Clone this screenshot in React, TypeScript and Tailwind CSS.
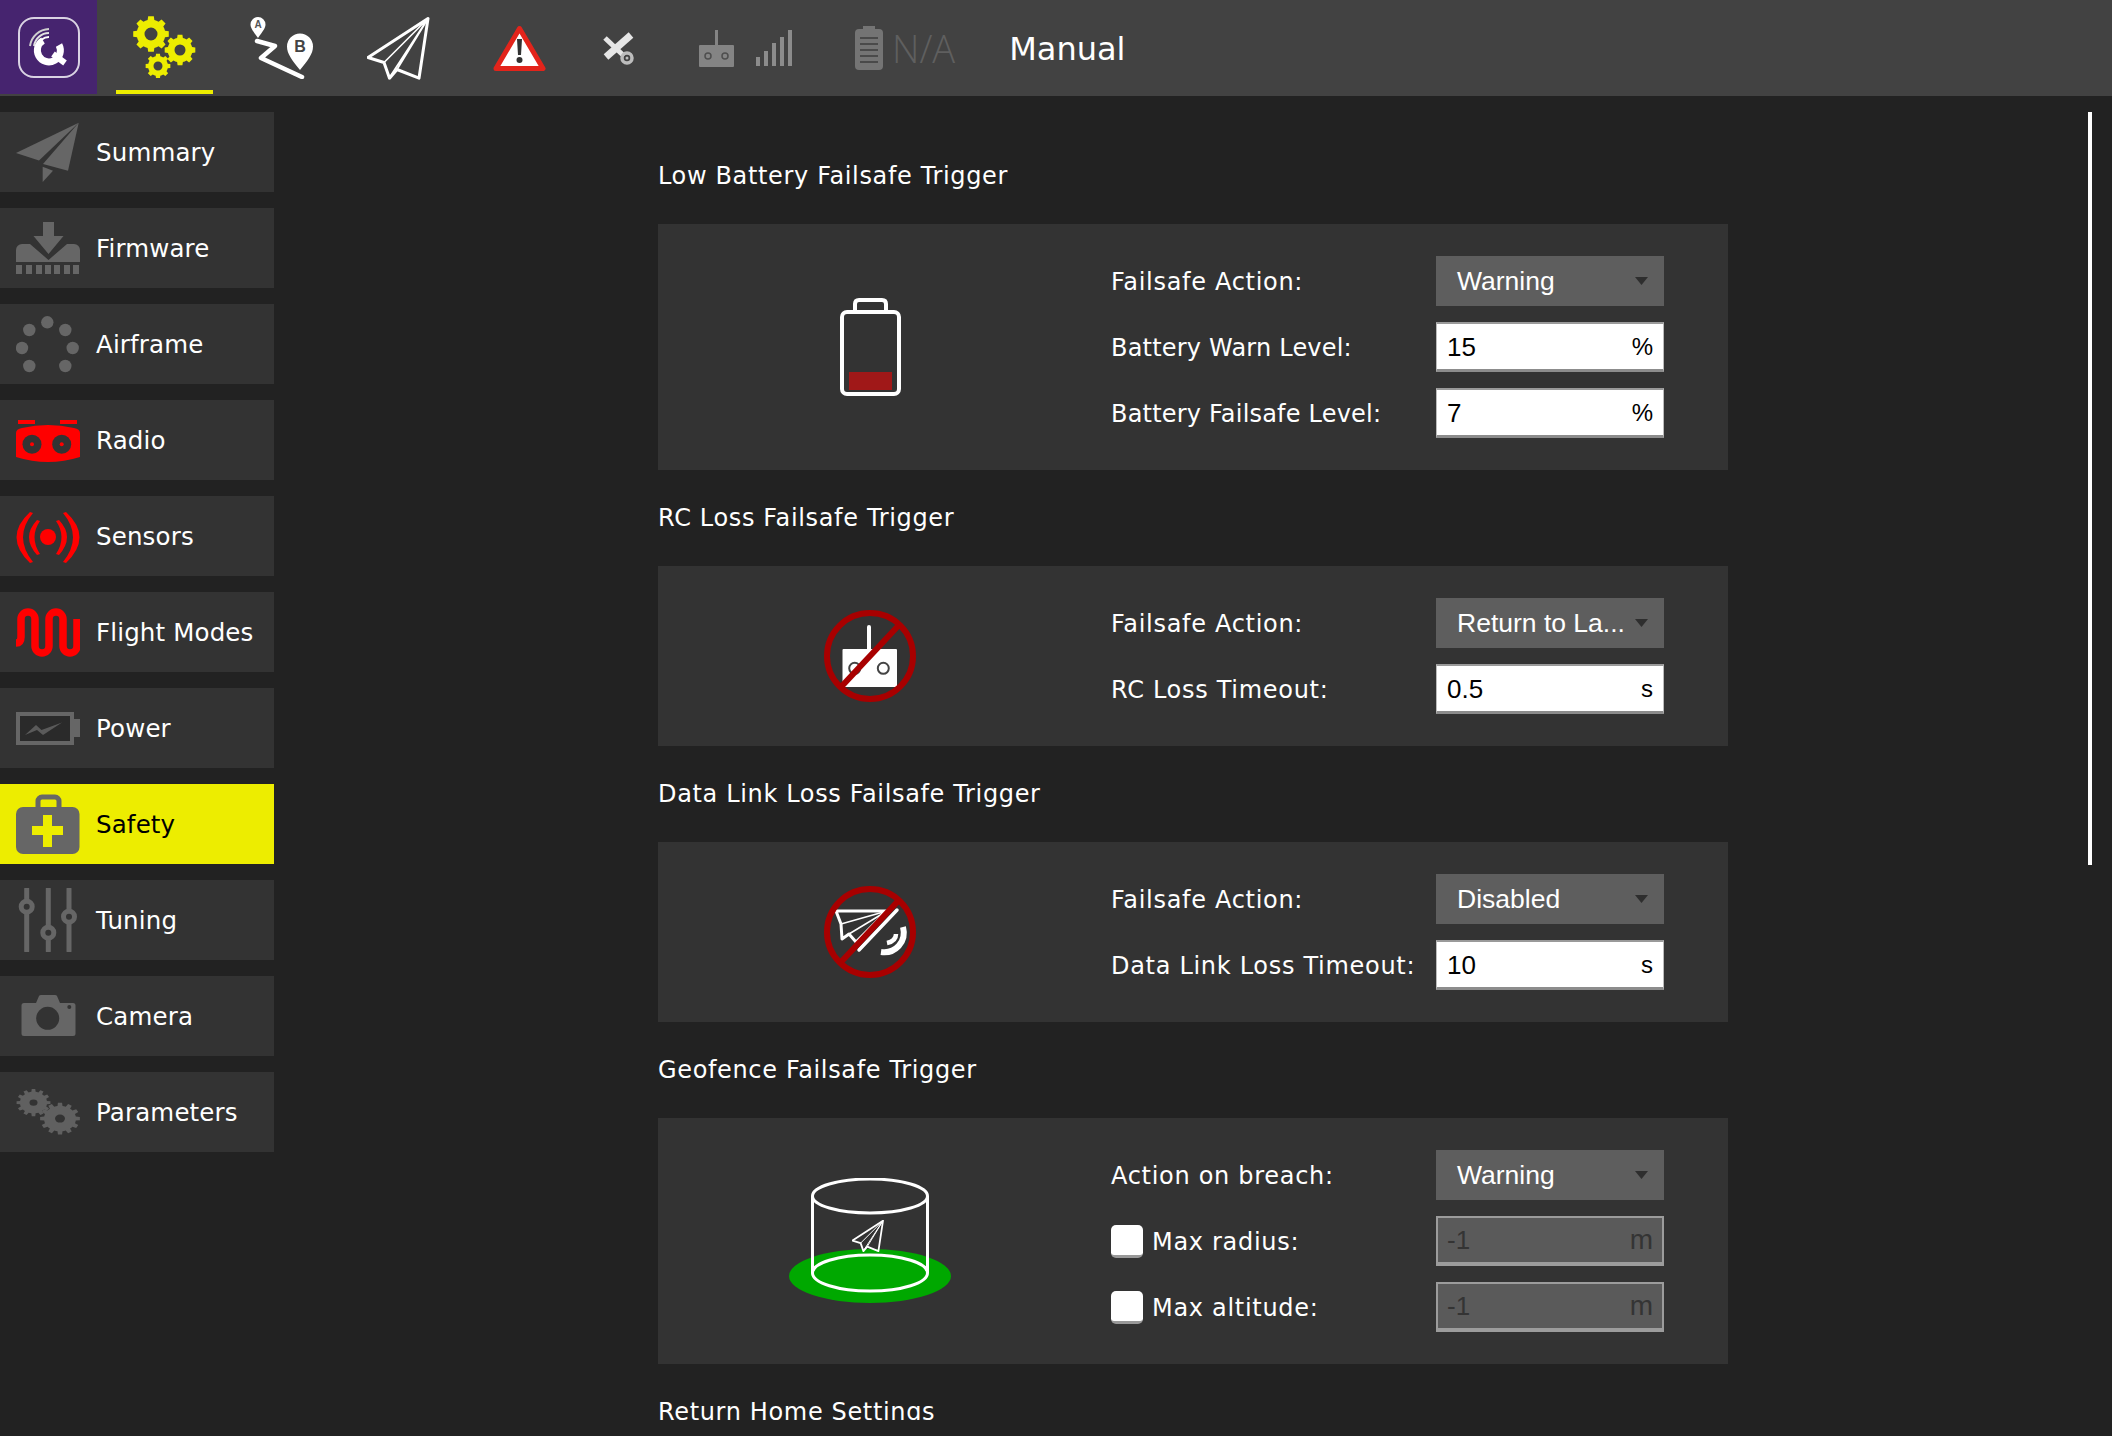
import React from 'react';

const UI = 'font-["DejaVu_Sans",sans-serif]';

// toothed wheel, outer radius r
function gearPath(cx: number, cy: number, r: number, teeth: number, hole = 0) {
  const inner = r * 0.8;
  const step = (Math.PI * 2) / teeth;
  let d = '';
  for (let i = 0; i < teeth; i++) {
    const a = i * step;
    const pts = [
      [inner, a - step * 0.5],
      [inner, a - step * 0.3],
      [r, a - step * 0.2],
      [r, a + step * 0.2],
      [inner, a + step * 0.3],
    ];
    pts.forEach(([rad, t], j) => {
      const x = (cx + rad * Math.cos(t)).toFixed(2);
      const y = (cy + rad * Math.sin(t)).toFixed(2);
      d += `${i === 0 && j === 0 ? 'M' : 'L'}${x} ${y}`;
    });
  }
  d += 'Z';
  if (hole) d += `M${cx - hole} ${cy}a${hole} ${hole} 0 1 0 ${hole * 2} 0a${hole} ${hole} 0 1 0 ${-hole * 2} 0Z`;
  return d;
}

const PLANE = 'M61 1L1 40L17 45L22.5 60.7L30 52L52 60.7Z';

function LogoIcon() {
  return (
    <svg width="62" height="61" viewBox="0 0 62 61" fill="none">
      <rect x="1" y="1" width="60" height="59" rx="15" stroke="#d9d3e3" strokeWidth="2" />
      <path d="M25 23.500A11.500 11.500 0 1 0 41 28" stroke="#fff" strokeWidth="7" />
      <path d="M35 37l12 9" stroke="#fff" strokeWidth="6" />
      <path d="M12 29a20 20 0 0 1 19-17" stroke="#cfcfcf" strokeWidth="2" />
      <path d="M16 29a15 15 0 0 1 15-13" stroke="#e2e2e2" strokeWidth="2" />
      <path d="M20 29a11 11 0 0 1 11-9" stroke="#fff" strokeWidth="2" />
    </svg>
  );
}

function GearsIcon() {
  return (
    <svg width="63" height="62" viewBox="0 0 63 62" fill="#eded00" fillRule="evenodd">
      <path d={gearPath(18, 18, 18, 8, 6.5)} />
      <path d={gearPath(47, 34, 15.5, 8, 5.5)} />
      <path d={gearPath(25, 50, 12.5, 8, 4.5)} />
    </svg>
  );
}

function RouteIcon() {
  return (
    <svg width="63" height="62" viewBox="0 0 63 62" fill="none">
      <path d="M8 21C3 14 0.5 11 0.5 7.5a7.5 7.5 0 0 1 15 0C15.500 11 13 14 8 21Z" fill="#fff" />
      <text x="8" y="11" textAnchor="middle" fontSize="10" fontWeight="700" fill="#555" fontFamily="Liberation Sans">A</text>
      <path d="M50 53C42 43 37 37 37 29.500a13 13 0 0 1 26 0C63 37 58 43 50 53Z" fill="#fff" />
      <text x="50" y="35" textAnchor="middle" fontSize="16" fontWeight="700" fill="#444" fontFamily="Liberation Sans">B</text>
      <path d="M7 24L25 29L11 41L52 60" stroke="#fff" strokeWidth="4.500" strokeLinecap="round" strokeLinejoin="round" />
    </svg>
  );
}

function PlaneOutline({ size = 63, width = 3 }: { size?: number; width?: number }) {
  return (
    <svg width={size} height={size} viewBox="0 0 63 62" fill="none" stroke="#fff" strokeLinejoin="round">
      <path d={PLANE} strokeWidth={width} />
      <path d="M61 1L17 45M61 1L30 52M61 1L22.500 60" strokeWidth={width * 0.55} />
    </svg>
  );
}

function WarningIcon() {
  return (
    <svg width="53" height="47" viewBox="0 0 53 47">
      <path d="M26.500 3.500L50 43.500H3Z" fill="#fff" stroke="#e3241b" strokeWidth="5" strokeLinejoin="round" />
      <path d="M24 14h5l-1 16h-3Z" fill="#333" />
      <circle cx="26.500" cy="35" r="3" fill="#333" />
    </svg>
  );
}

function SatelliteIcon() {
  return (
    <svg width="36" height="36" viewBox="0 0 36 36" fill="none">
      <path d="M31 5L6 27" stroke="#e6e6e6" strokeWidth="7" />
      <path d="M5 8L24 26" stroke="#e6e6e6" strokeWidth="5" />
      <circle cx="27" cy="28" r="5" stroke="#bdbdbd" strokeWidth="3.500" />
      <circle cx="27" cy="28" r="1.500" fill="#bdbdbd" />
    </svg>
  );
}

function RcIcon() {
  return (
    <svg width="35" height="37" viewBox="0 0 35 37" fill="#8c8c8c">
      <rect x="16" y="0" width="3" height="16" />
      <rect x="0" y="15" width="35" height="22" rx="1" />
      <circle cx="9" cy="26" r="3" fill="none" stroke="#505050" strokeWidth="1.500" />
      <circle cx="26" cy="26" r="3" fill="none" stroke="#505050" strokeWidth="1.500" />
    </svg>
  );
}

function SignalIcon() {
  return (
    <svg width="36" height="36" viewBox="0 0 36 36" fill="#8c8c8c">
      <rect x="0" y="27" width="4" height="9" />
      <rect x="8" y="21" width="4" height="15" />
      <rect x="16" y="13" width="4" height="23" />
      <rect x="24" y="7" width="4" height="29" />
      <rect x="32" y="0" width="4" height="36" />
    </svg>
  );
}

function BatteryTopIcon() {
  return (
    <svg width="28" height="44" viewBox="0 0 28 44" fill="#747474">
      <path d="M8 0h12v4H8Z" />
      <rect x="0" y="3" width="28" height="41" rx="4" />
      <g fill="#4a4a4a">
        <rect x="5" y="11" width="18" height="2" />
        <rect x="5" y="17" width="18" height="2" />
        <rect x="5" y="23" width="18" height="2" />
        <rect x="5" y="29" width="18" height="2" />
        <rect x="5" y="35" width="18" height="2" />
      </g>
    </svg>
  );
}

const SIDE_ICON = { width: 64, height: 64, viewBox: '0 0 64 64' };

function SummaryIcon() {
  return (
    <svg {...SIDE_ICON} fill="#666">
      <path d="M62.700 2.700L0 33L23 40.500Z" />
      <path d="M62.700 2.700L27 44L52 50.700Z" />
      <path d="M26.700 46.700V62L37 50.700Z" />
    </svg>
  );
}

function FirmwareIcon() {
  return (
    <svg {...SIDE_ICON} fill="#666">
      <path d="M27 6h11v14h9.500L32.500 38L17.500 20H27Z" />
      <path d="M0 46V34a6 6 0 0 1 6-6h8L32.500 44L51 28h7a6 6 0 0 1 6 6v12Z" />
      {[0, 10, 20, 29, 38, 48, 57].map((x) => (
        <rect key={x} x={x} y="49" width="6" height="9" />
      ))}
    </svg>
  );
}

function AirframeIcon() {
  const dots = [[31.3, 10.3], [13.3, 18], [49.3, 18], [6, 36], [56.7, 36], [13.3, 54], [49.3, 54]];
  return (
    <svg {...SIDE_ICON} fill="#666">
      {dots.map(([cx, cy]) => (
        <circle key={`${cx}-${cy}`} cx={cx} cy={cy} r="6.200" />
      ))}
    </svg>
  );
}

function RadioIcon() {
  return (
    <svg {...SIDE_ICON} fill="#f00">
      <rect x="2" y="12" width="17" height="4" />
      <rect x="44" y="12" width="17" height="4" />
      <path d="M0 25Q0 21 6 20Q32 14 58 20Q64 21 64 25V49Q32 59 0 49Z" />
      <circle cx="16" cy="36.300" r="9.500" fill="#333" />
      <circle cx="45.700" cy="36.300" r="9.500" fill="#333" />
      <circle cx="16" cy="36.300" r="2" />
      <circle cx="45.700" cy="36.300" r="2" />
    </svg>
  );
}

function SensorsIcon() {
  return (
    <svg {...SIDE_ICON} fill="#f00">
      <circle cx="32" cy="33" r="8" />
      <path d="M14 8Q-13 33 14 59L17 58Q-3 33 17 9Z" />
      <path d="M21 16Q5 33 21 51L24 50Q13 33 24 17Z" />
      <path d="M50 8Q77 33 50 59L47 58Q67 33 47 9Z" />
      <path d="M43 16Q59 33 43 51L40 50Q51 33 40 17Z" />
    </svg>
  );
}

function FlightModesIcon() {
  return (
    <svg {...SIDE_ICON} fill="none" stroke="#f00" strokeWidth="7.500">
      <path d="M0 43Q5 43 5 37V19a7 7 0 0 1 14 0V46a7 7 0 0 0 14 0V19a7 7 0 0 1 14 0V46a7 7 0 0 0 14 0V19" />
    </svg>
  );
}

function PowerIcon() {
  return (
    <svg {...SIDE_ICON} fill="none">
      <rect x="2" y="18" width="54" height="29" fill="#2a2a2a" stroke="#666" strokeWidth="4" />
      <path d="M57 23h7v18h-7Z" fill="#666" />
      <path d="M9 39L20 29L25.500 34L46 26.500L27 39L21 34Z" fill="#5a5a5a" />
    </svg>
  );
}

function SafetyIcon() {
  return (
    <svg {...SIDE_ICON} fill="#666">
      <rect x="22" y="5" width="21" height="16" rx="4" fill="none" stroke="#666" strokeWidth="5" />
      <rect x="0" y="15" width="63.500" height="47" rx="7" />
      <path d="M27 23h9v11h11v9H36v12h-9V43H16v-9h11Z" fill="#eded00" />
    </svg>
  );
}

function TuningIcon() {
  const knobs = [[10.7, 18.7], [32.3, 44.7], [53, 28.7]];
  return (
    <svg {...SIDE_ICON} fill="none" stroke="#666">
      {knobs.map(([x, y]) => (
        <g key={x}>
          <path d={`M${x} 1V63`} strokeWidth="5" strokeLinecap="round" />
          <circle cx={x} cy={y} r="5.500" fill="#333" strokeWidth="5" />
        </g>
      ))}
    </svg>
  );
}

function CameraIcon() {
  return (
    <svg {...SIDE_ICON} fill="#666">
      <path d="M8 19h12l3-7q.5-1 2-1h14q1.500 0 2 1l3 7h13q2.500 0 2.500 2.500v28q0 2.500-2.500 2.500H8q-2.500 0-2.500-2.500v-28Q5.500 19 8 19Z" />
      <circle cx="31.700" cy="34.300" r="11.500" fill="#333" />
      <circle cx="53.300" cy="23" r="2" fill="#333" />
    </svg>
  );
}

function ParametersIcon() {
  return (
    <svg {...SIDE_ICON} fill="#606060" fillRule="evenodd">
      <g transform="translate(0 5) scale(1 .8)">
        <path d={gearPath(17.5, 22, 17, 12)} />
        <path d={gearPath(44, 42, 20, 12)} />
        <circle cx="17.500" cy="22" r="4" fill="#333" />
        <circle cx="44" cy="42" r="5" fill="#333" />
      </g>
    </svg>
  );
}

const NO_RED = '#a80000';

function BatteryLowIcon() {
  return (
    <svg width="61" height="98" viewBox="0 0 61 98" fill="none" stroke="#fff" strokeWidth="4">
      <path d="M15 14V6q0-4 4-4h23q4 0 4 4v8" />
      <rect x="2" y="14" width="57" height="82" rx="5" />
      <rect x="9" y="74" width="43" height="18" fill="#a01818" stroke="none" />
    </svg>
  );
}

function RcLossIcon() {
  return (
    <svg width="92" height="92" viewBox="-46 -46 92 92">
      <rect x="-3" y="-31" width="4" height="26" rx="2" fill="#fff" />
      <rect x="-27.500" y="-7" width="54.500" height="38" rx="1" fill="#fff" />
      <circle cx="-15.300" cy="12.300" r="5.500" fill="#fff" stroke="#444" strokeWidth="2" />
      <circle cx="13.300" cy="12.300" r="5.500" fill="#fff" stroke="#444" strokeWidth="2" />
      <circle cx="0" cy="0" r="43" fill="none" stroke={NO_RED} strokeWidth="6" />
      <path d="M29 -31L-29 31" stroke={NO_RED} strokeWidth="6" />
    </svg>
  );
}

function DataLinkLossIcon() {
  return (
    <svg width="92" height="92" viewBox="-46 -46 92 92" fill="none">
      <g stroke="#fff" strokeLinejoin="round">
        <path d="M-34 -21H17L-14 10L-21 2L-28 7L-29 -8Z" strokeWidth="3" />
        <path d="M17 -21L-29 -8M17 -21L-21 2" strokeWidth="1.500" />
        <path d="M27 -22L-11 18" strokeWidth="3.500" strokeLinecap="round" />
        <path d="M11 20C25 22 37 10 33 -5" strokeWidth="6" />
        <path d="M17 11C22 10 26 7 26 2" strokeWidth="4.500" />
      </g>
      <circle cx="0" cy="0" r="43" stroke={NO_RED} strokeWidth="6" />
      <path d="M29 -32L-29 30" stroke={NO_RED} strokeWidth="6" />
    </svg>
  );
}

function GeofenceIcon() {
  return (
    <div className="relative w-[162px] h-[126px]">
      <svg width="162" height="126" viewBox="0 0 162 126" fill="none">
        <ellipse cx="81" cy="98" rx="81" ry="27" fill="#00a800" />
        <g stroke="#fff" strokeWidth="3">
          <ellipse cx="81" cy="18" rx="57.500" ry="17" />
          <ellipse cx="81" cy="95" rx="57.500" ry="18" />
          <path d="M23.500 18V95M138.500 18V95" />
        </g>
      </svg>
      <div className="absolute left-[63px] top-[42px]">
        <PlaneOutline size={32} width={3.5} />
      </div>
    </div>
  );
}

const navItems = [
  { label: 'Summary', icon: <SummaryIcon /> },
  { label: 'Firmware', icon: <FirmwareIcon /> },
  { label: 'Airframe', icon: <AirframeIcon /> },
  { label: 'Radio', icon: <RadioIcon /> },
  { label: 'Sensors', icon: <SensorsIcon /> },
  { label: 'Flight Modes', icon: <FlightModesIcon /> },
  { label: 'Power', icon: <PowerIcon /> },
  { label: 'Safety', icon: <SafetyIcon />, active: true },
  { label: 'Tuning', icon: <TuningIcon /> },
  { label: 'Camera', icon: <CameraIcon /> },
  { label: 'Parameters', icon: <ParametersIcon /> },
];

function Dropdown({ value }: { value: string }) {
  return (
    <div className='w-[228px] h-[50px] bg-[#5e5e5e] flex items-center justify-between pl-[21px] pr-[16px] text-white text-[26.5px] font-["Liberation_Sans",sans-serif]'>
      <span className="pt-[2px] whitespace-nowrap">{value}</span>
      <svg width="13" height="8" viewBox="0 0 13 8" fill="#2e2e2e">
        <path d="M0 0h13L6.500 8Z" />
      </svg>
    </div>
  );
}

function NumberField({ value, unit, disabled }: { value: string; unit: string; disabled?: boolean }) {
  return (
    <div
      className={
        disabled
          ? 'w-[228px] h-[50px] bg-[#5a5a5a] border-2 border-[#9c9c9c] border-b-[4px] flex items-center justify-between px-[9px] text-[#343434] text-[26px] font-["Liberation_Sans",sans-serif]'
          : 'w-[228px] h-[50px] bg-white border-t-2 border-b-[3px] border-x-[1px] border-t-[#9a9a9a] border-b-[#8c8c8c] border-x-[#bbbbbb] flex items-center justify-between px-[10px] text-black text-[26px] font-["Liberation_Sans",sans-serif]'
      }
    >
      <span className="pt-[1px]">{value}</span>
      <span className={disabled ? 'text-[28px]' : 'text-[24px]'}>{unit}</span>
    </div>
  );
}

function Label({ children, tight }: { children: React.ReactNode; tight?: boolean }) {
  return (
    <div className={`pt-[2px] text-white text-[24px] whitespace-nowrap ${tight ? 'tracking-[0.2px]' : 'tracking-[0.7px]'}`}>
      {children}
    </div>
  );
}

function CheckLabel({ children }: { children: React.ReactNode }) {
  return (
    <div className="flex items-center gap-[9px]">
      <div className="w-[32px] h-[33px] bg-white rounded-[5px] border-b-[3px] border-[#999]" />
      <Label>{children}</Label>
    </div>
  );
}

function Heading({ children }: { children: React.ReactNode }) {
  return <h2 className="h-[32px] pt-[2px] flex items-center text-white text-[24px] tracking-[0.65px] font-normal whitespace-nowrap">{children}</h2>;
}

function Section({ title, icon, children }: { title: string; icon: React.ReactNode; children: React.ReactNode }) {
  return (
    <section className="mb-[31px]">
      <Heading>{title}</Heading>
      <div className="mt-[33px] w-[1070px] bg-[#333333] flex items-center">
        <div className="w-[424px] flex justify-center shrink-0">{icon}</div>
        <div className="ml-[29px] py-[32px] grid grid-cols-[325px_228px] gap-y-[16px] items-center">{children}</div>
      </div>
    </section>
  );
}

export default function App() {
  return (
    <div className={`w-[2112px] h-[1436px] bg-[#222222] overflow-hidden flex flex-col ${UI}`}>
      <header className="h-[96px] shrink-0 bg-[#424242] flex items-center">
        <div className="w-[97px] h-[94px] self-start bg-[#46246f] flex items-center pl-[18px]">
          <LogoIcon />
        </div>
        <div className="relative w-[97px] h-[94px] self-start ml-[19px] flex items-center justify-center">
          <GearsIcon />
          <div className="absolute left-0 right-0 bottom-0 h-[4px] bg-[#eded00]" />
        </div>
        <div className="ml-[37px]"><RouteIcon /></div>
        <div className="ml-[54px]"><PlaneOutline /></div>
        <div className="ml-[63px]"><WarningIcon /></div>
        <div className="ml-[54px]"><SatelliteIcon /></div>
        <div className="ml-[63px] opacity-90"><RcIcon /></div>
        <div className="ml-[22px]"><SignalIcon /></div>
        <div className="ml-[63px]"><BatteryTopIcon /></div>
        <div className='ml-[9px] text-[38px] font-light text-[#5f5f5f] font-["Open_Sans",sans-serif]'>N/A</div>
        <div className="ml-[54px] pt-[2px] text-[32px] text-white">Manual</div>
      </header>

      <div className="relative flex-1 flex min-h-0">
        <nav className="w-[274px] shrink-0 pt-[16px] flex flex-col gap-[16px]">
          {navItems.map((item) => (
            <div
              key={item.label}
              className={`h-[80px] shrink-0 flex items-center gap-[16px] pl-[16px] text-[24.5px] tracking-[0.15px] ${
                item.active ? 'bg-[#eded00] text-black' : 'bg-[#333333] text-white'
              }`}
            >
              {item.icon}
              <span className="pt-[2px] whitespace-nowrap">{item.label}</span>
            </div>
          ))}
        </nav>

        <main className="ml-[384px] pt-[63px] h-[1324px] overflow-hidden">
          <Section title="Low Battery Failsafe Trigger" icon={<BatteryLowIcon />}>
            <Label>Failsafe Action:</Label>
            <Dropdown value="Warning" />
            <Label tight>Battery Warn Level:</Label>
            <NumberField value="15" unit="%" />
            <Label tight>Battery Failsafe Level:</Label>
            <NumberField value="7" unit="%" />
          </Section>

          <Section title="RC Loss Failsafe Trigger" icon={<RcLossIcon />}>
            <Label>Failsafe Action:</Label>
            <Dropdown value="Return to La..." />
            <Label>RC Loss Timeout:</Label>
            <NumberField value="0.5" unit="s" />
          </Section>

          <Section title="Data Link Loss Failsafe Trigger" icon={<DataLinkLossIcon />}>
            <Label>Failsafe Action:</Label>
            <Dropdown value="Disabled" />
            <Label>Data Link Loss Timeout:</Label>
            <NumberField value="10" unit="s" />
          </Section>

          <Section title="Geofence Failsafe Trigger" icon={<GeofenceIcon />}>
            <Label>Action on breach:</Label>
            <Dropdown value="Warning" />
            <CheckLabel>Max radius:</CheckLabel>
            <NumberField value="-1" unit="m" disabled />
            <CheckLabel>Max altitude:</CheckLabel>
            <NumberField value="-1" unit="m" disabled />
          </Section>

          <Heading>Return Home Settings</Heading>
        </main>

        {/* scroll indicator */}
        <div className="absolute left-[2088px] top-[16px] w-[4px] h-[753px] bg-white" />
      </div>
    </div>
  );
}
